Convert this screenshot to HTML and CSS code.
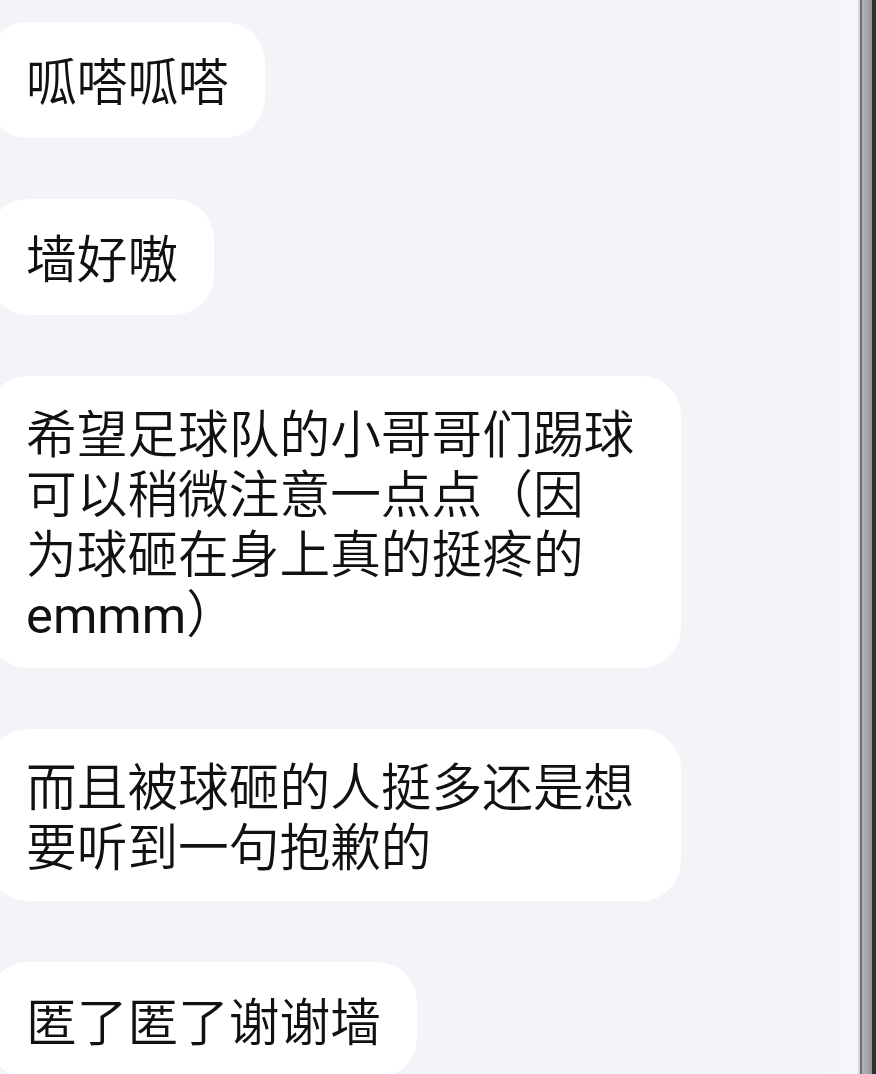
FILE: index.html
```html
<!DOCTYPE html>
<html lang="zh-CN">
<head>
<meta charset="utf-8">
<title>聊天</title>
<link rel="stylesheet" href="styles.css">
</head>
<body>
<div class="screen">
  <main class="chat">
    <div class="bubble">呱嗒呱嗒</div>
    <div class="bubble">墙好嗷</div>
    <div class="bubble wide">希望足球队的小哥哥们踢球<br>可以稍微注意一点点（因<br>为球砸在身上真的挺疼的<br><span class="latin">emmm</span>）</div>
    <div class="bubble wide">而且被球砸的人挺多还是想<br>要听到一句抱歉的</div>
    <div class="bubble">匿了匿了谢谢墙</div>
  </main>
  <div class="edge">
    <span class="edge-light"></span>
    <span class="edge-dark"></span>
    <span class="edge-mid"></span>
    <span class="edge-shadow"></span>
  </div>
</div>
</body>
</html>
```

FILE: styles.css
```css
html, body {
  margin: 0;
  padding: 0;
  height: 100%;
  overflow: hidden;
}

body {
  background: #f3f4f8;
  font-family: Roboto, "Noto Sans CJK SC", sans-serif;
  color: #111;
}

.screen {
  display: flex;
  height: 1074px;
}

.chat {
  flex: 1;
  display: flex;
  flex-direction: column;
  align-items: flex-start;
  gap: 61px;
  padding-top: 22px;
  background: linear-gradient(to right, #f3f4f8 0, #f3f4f8 96%, #f6f7fa 100%);
}

.bubble {
  background: #ffffff;
  border-radius: 40px;
  margin-left: -12px;
  padding: 32px 36px 24px 38px;
  font-size: 50.7px;
  font-weight: 350;
  line-height: 60px;
  white-space: nowrap;
}

.bubble.wide {
  padding: 30px 47px 22px 38px;
}

.latin {
  font-weight: 400;
}

.edge {
  width: 18px;
  display: flex;
  flex: none;
}

.edge-light {
  width: 2px;
  background: #d6d7dc;
}

.edge-dark {
  width: 2px;
  background: #6d6e73;
}

.edge-mid {
  width: 10px;
  background: linear-gradient(to right, #b3b4b9, #a3a4a9 60%, #8f9095);
}

.edge-shadow {
  width: 4px;
  background: #2e2f33;
}
```
